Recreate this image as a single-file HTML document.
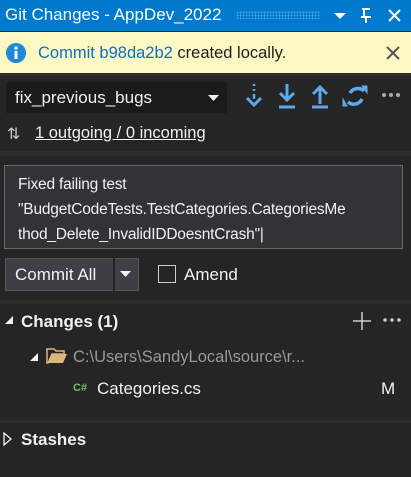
<!DOCTYPE html>
<html><head><style>
*{margin:0;padding:0;box-sizing:border-box}
body{width:411px;height:477px;background:#252526;font-family:"Liberation Sans",sans-serif;color:#f1f1f1;position:relative;overflow:hidden;font-size:16px}
.a{position:absolute;white-space:nowrap}
</style></head><body>
<div class="a" style="left:0;top:0;width:411px;height:31px;background:#007acc"></div>
<div class="a" style="left:5px;top:5px;font-size:17px;color:#fff">Git Changes - AppDev_2022</div>
<div class="a" style="left:236px;top:11px;width:84px;height:8px;background-image:radial-gradient(#4a9ee0 1px,transparent 1px);background-size:3px 3px"></div>
<svg class="a" style="left:330px;top:8px" width="80" height="16">
<path d="M4 5h12l-6 6z" fill="#fff"/>
<path d="M32 1h8M34 1v8M31 9h10M36 9v6" stroke="#fff" stroke-width="2" fill="none"/>
<path d="M59 2l11 11M70 2L59 13" stroke="#fff" stroke-width="2"/>
</svg>
<div class="a" style="left:0;top:32px;width:411px;height:41px;background:#fcf8c4"></div>
<svg class="a" style="left:5px;top:42px" width="22" height="22"><circle cx="11" cy="11" r="10" fill="#1e8ad6"/><rect x="9.5" y="9" width="3" height="8" fill="#fff"/><circle cx="11" cy="6" r="1.7" fill="#fff"/></svg>
<div class="a" style="left:38px;top:44px;font-size:16.5px;color:#1e1e1e"><span style="color:#0e70c0">Commit b98da2b2</span> created locally.</div>
<svg class="a" style="left:386px;top:46px" width="14" height="14"><path d="M1 1l12 12M13 1L1 13" stroke="#555" stroke-width="2"/></svg>
<div class="a" style="left:0;top:73px;width:411px;height:3px;background:#2d2d30"></div>
<div class="a" style="left:6px;top:82px;width:221px;height:31px;background:#1b1b1c"></div>
<div class="a" style="left:15px;top:88px;font-size:17px">fix_previous_bugs</div>
<svg class="a" style="left:208px;top:94px" width="12" height="8"><path d="M0 1h11l-5.5 6z" fill="#f1f1f1"/></svg>
<svg class="a" style="left:244px;top:82px" width="165" height="30" fill="#5ea8ec" stroke="#5ea8ec">
<path d="M10 2v2M10 7v2M10 12v5" stroke-width="2.5"/><path d="M3 16l7 7 7-7" fill="none" stroke-width="3"/>
<path d="M43 2v15" stroke-width="3"/><path d="M36 11l7 7 7-7" fill="none" stroke-width="3"/><path d="M35 25h16" stroke-width="3"/>
<path d="M76 22V6" stroke-width="3"/><path d="M69 12l7-7 7 7" fill="none" stroke-width="3"/><path d="M68 25h16" stroke-width="3"/>
<path d="M104 20a9 9 0 0 0 14-3M120 9a9 9 0 0 0-14 2" fill="none" stroke-width="3.5"/>
<path d="M118 4l5 0 0 7z" /><path d="M103 24l-4 0 0-7z"/>
<circle cx="140" cy="13" r="2" stroke="none" fill="#aaa"/><circle cx="147" cy="13" r="2" stroke="none" fill="#aaa"/><circle cx="154" cy="13" r="2" stroke="none" fill="#aaa"/>
</svg>
<div class="a" style="left:7px;top:124px;font-size:16px;color:#ccc">⇅</div>
<div class="a" style="left:35px;top:124px;font-size:16.5px;text-decoration:underline;color:#f1f1f1">1 outgoing / 0 incoming</div>
<div class="a" style="left:0;top:151px;width:411px;height:5px;background:#2d2d30"></div>
<div class="a" style="left:4px;top:165px;width:399px;height:84px;background:#333337;border:1px solid #6a6a70"></div>
<div class="a" style="left:18px;top:172px;font-size:15.5px;line-height:25px;color:#f1f1f1;letter-spacing:-0.2px">Fixed failing test<br>"BudgetCodeTests.TestCategories.CategoriesMe<br>thod_Delete_InvalidIDDoesntCrash"|</div>
<div class="a" style="left:5px;top:258px;width:134px;height:33px;background:#3f3f46;border:1px solid #555"></div>
<div class="a" style="left:113px;top:258px;width:2px;height:33px;background:#252526"></div>
<div class="a" style="left:15px;top:265px;font-size:17px">Commit All</div>
<svg class="a" style="left:120px;top:270px" width="12" height="8"><path d="M0 1h11l-5.5 6z" fill="#f1f1f1"/></svg>
<div class="a" style="left:158px;top:265px;width:18px;height:18px;border:1px solid #ccc"></div>
<div class="a" style="left:184px;top:265px;font-size:17px">Amend</div>
<div class="a" style="left:0;top:300px;width:411px;height:4px;background:#2d2d30"></div>
<svg class="a" style="left:4px;top:315px" width="10" height="10"><path d="M9 1v8H1z" fill="#f1f1f1"/></svg>
<div class="a" style="left:21px;top:312px;font-size:17px;font-weight:bold">Changes (1)</div>
<svg class="a" style="left:352px;top:311px" width="52" height="20"><path d="M10 1v18M1 10h18" stroke="#ccc" stroke-width="1.5"/><circle cx="33" cy="9" r="1.8" fill="#ccc"/><circle cx="40" cy="9" r="1.8" fill="#ccc"/><circle cx="47" cy="9" r="1.8" fill="#ccc"/></svg>
<svg class="a" style="left:29px;top:352px" width="10" height="10"><path d="M9 1v8H1z" fill="#f1f1f1"/></svg>
<svg class="a" style="left:46px;top:347px" width="22" height="18"><path d="M1 2h7l2 2h8v3H6L2 16H1z" fill="none" stroke="#dcb67a" stroke-width="1.5"/><path d="M6 7h15l-4 9H2z" fill="#dcb67a"/></svg>
<div class="a" style="left:73px;top:348px;font-size:16.5px;color:#999">C:\Users\SandyLocal\source\r...</div>
<div class="a" style="left:73px;top:382px;font-size:11px;font-weight:bold;color:#6fbf6f">C#</div>
<div class="a" style="left:97px;top:379px;font-size:17px">Categories.cs</div>
<div class="a" style="left:381px;top:379px;font-size:17px">M</div>
<div class="a" style="left:0;top:420px;width:411px;height:3px;background:#2d2d30"></div>
<svg class="a" style="left:3px;top:432px" width="10" height="14"><path d="M1 1l7 6-7 6z" fill="none" stroke="#f1f1f1" stroke-width="1.3"/></svg>
<div class="a" style="left:21px;top:430px;font-size:17px;font-weight:bold">Stashes</div>
</body></html>
